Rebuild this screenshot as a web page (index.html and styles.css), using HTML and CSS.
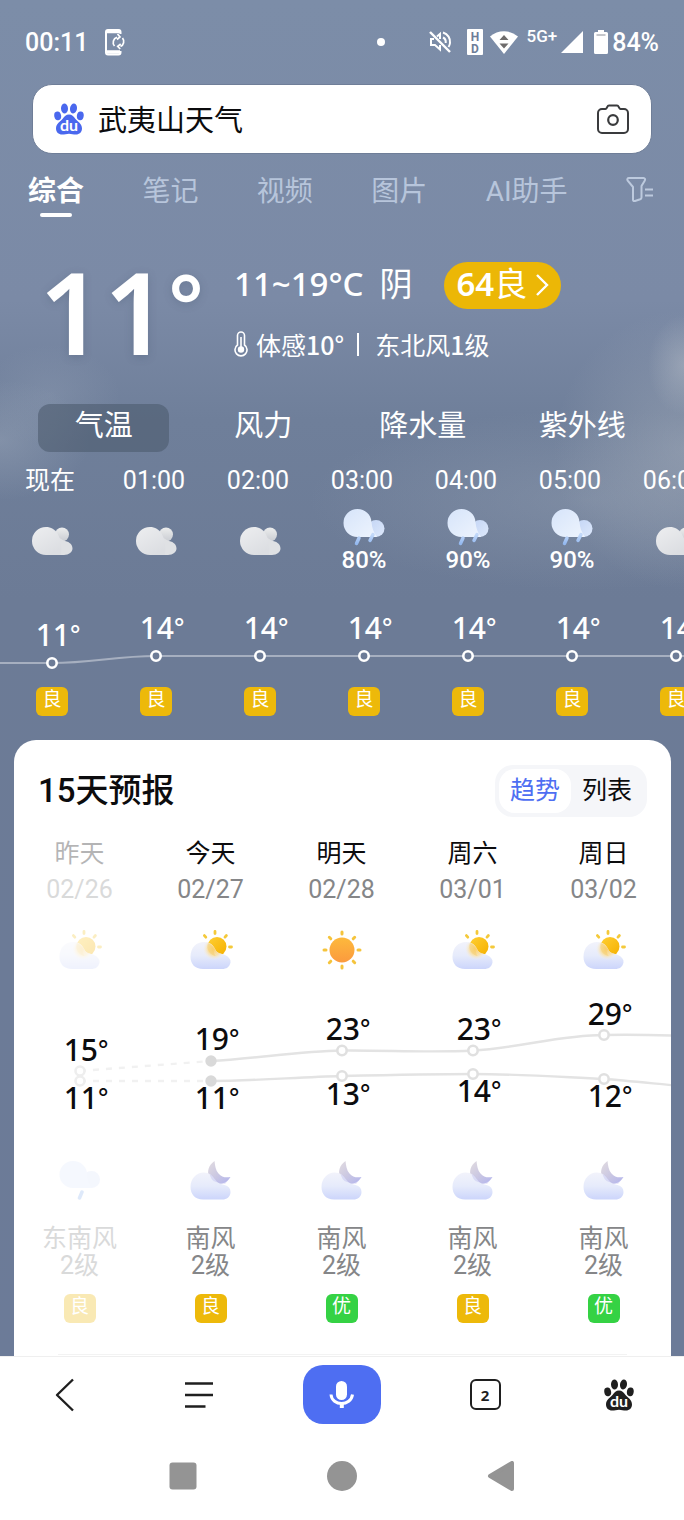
FILE: index.html
```html
<!DOCTYPE html>
<html lang="zh-CN">
<head>
<meta charset="utf-8">
<meta name="viewport" content="width=device-width, initial-scale=1">
<title>武夷山天气</title>
<link rel="stylesheet" href="styles.css">
</head>
<body>
<svg class="sprite" width="0" height="0" aria-hidden="true">
  <defs>
    <linearGradient id="grey" x1="0" y1="0" x2=".6" y2="1"><stop offset="0" stop-color="#edeef0"/><stop offset="1" stop-color="#dcdee2"/></linearGradient>
    <linearGradient id="greySmall" x1="0" y1="0" x2="0" y2="1"><stop offset="0" stop-color="#eceded"/><stop offset="1" stop-color="#c9ccd2"/></linearGradient>
    <linearGradient id="rainBig" x1="0" y1="0" x2="1" y2="1"><stop offset="0" stop-color="#d6e4fa"/><stop offset="1" stop-color="#eef4fd"/></linearGradient>
    <linearGradient id="rainSmall" x1="0" y1="0" x2="1" y2="1"><stop offset="0" stop-color="#c3d5f5"/><stop offset="1" stop-color="#dde8fb"/></linearGradient>
    <linearGradient id="drop" x1="0" y1="0" x2="0" y2="1"><stop offset="0" stop-color="#c3d9f9"/><stop offset="1" stop-color="#94b9f0"/></linearGradient>
    <linearGradient id="dayCloud" x1="0" y1="0" x2="0" y2="1"><stop offset="0" stop-color="#f2f3fb"/><stop offset=".5" stop-color="#e6ebfb"/><stop offset="1" stop-color="#ccd5fb"/></linearGradient>
    <linearGradient id="sunFill" x1="0" y1="0" x2="1" y2="1"><stop offset="0" stop-color="#ffcf33"/><stop offset="1" stop-color="#f5b000"/></linearGradient>
    <linearGradient id="sunFull" x1="0" y1="0" x2="0" y2="1"><stop offset="0" stop-color="#fdb93c"/><stop offset="1" stop-color="#fb9a3e"/></linearGradient>
    <radialGradient id="glow" gradientUnits="userSpaceOnUse" cx="25" cy="20" r="11"><stop offset="0" stop-color="#fbcf6c"/><stop offset=".6" stop-color="#fbe0a0" stop-opacity=".8"/><stop offset="1" stop-color="#f6efe0" stop-opacity="0"/></radialGradient>
    <linearGradient id="moonFill" x1="0" y1="0" x2="1" y2="1"><stop offset="0" stop-color="#e2dce0"/><stop offset=".5" stop-color="#cbc8e2"/><stop offset="1" stop-color="#b2b4ee"/></linearGradient>
  </defs>
  <symbol id="cloud" viewBox="0 0 42 30">
    <circle cx="31" cy="8.500" r="7" fill="url(#greySmall)"/>
    <path d="M24 29V9c4 2 7 5 10 6 5 1 7.500 4 7.500 7.500C41.500 26 38 29 33 29z" fill="#dfe1e4"/>
    <path d="M15 1c5 0 9 2.500 11.500 6.500C29 12 31 18 30 29H15A14 14 0 0 1 15 1z" fill="url(#grey)"/>
  </symbol>
  <symbol id="rain" viewBox="0 0 42 38">
    <circle cx="33" cy="20.500" r="8.500" fill="url(#rainSmall)"/>
    <path d="M14.500 1C22 1 28 6.500 28.500 14c.5 6 2 10 5.500 15H14.500a14 14 0 0 1 0-28z" fill="url(#rainBig)"/>
    <path d="M16 30l-2.500 5.500M30 26.500l-3 6" stroke="url(#drop)" stroke-width="3.500" stroke-linecap="round"/>
  </symbol>
  <symbol id="partly" viewBox="0 0 44 42">
    <g stroke="#f4c93a" stroke-width="2.800" stroke-linecap="round"><path d="M26 2.500v2M37.400 6.500l-1.400 1.600M40.500 18h2M15.400 6.600l1.400 1.600"/></g>
    <circle cx="28" cy="17.500" r="9.500" fill="url(#sunFill)"/>
    <path d="M14 40C6 40 1.500 35 1.500 28 1.500 18 8 13 15 13c6 0 9 3 11 7 2 5 6 4 10 6 4 2 6 4.500 5.500 7.500-1 4.500-4 6.500-8.500 6.500z" fill="url(#dayCloud)"/>
    <path d="M15 13c6 0 9 3 11 7 2 5 6 4 10 6l-8 6-18-6z" fill="url(#glow)"/>
    <path d="M19 14a9.500 9.500 0 0 0 8 13c-2-1-2-5-3-8s-3-4-5-5z" fill="#f6c75a" opacity=".4"/>
  </symbol>
  <symbol id="sun" viewBox="0 0 44 42">
    <g stroke="#f5c43c" stroke-width="3" stroke-linecap="round"><path d="M22 3v2M22 37v2M4 21h2M38 21h2M9.300 8.300l1.500 1.500M33.200 32.200l1.500 1.500M34.700 8.300l-1.500 1.500M10.800 32.200l-1.500 1.500"/></g>
    <circle cx="22" cy="21" r="12.500" fill="url(#sunFull)"/>
  </symbol>
  <symbol id="night" viewBox="0 0 44 42">
    <path d="M25.500 2c-6 4-8 11-5 17 4 8 16 8 21-1-5 1-9 0-12-3.500C26.500 11 26 6 25.500 2z" fill="url(#moonFill)"/>
    <path d="M14 40.500C6 40.500 1.500 35 1.500 28 1.500 19 8 13.500 14.500 13.500c6 0 9 3 12 7.500 2 3 5 4 9 5 4 1 6 3.500 6 7 0 5-4 7.500-8 7.500z" fill="url(#dayCloud)"/>
    <path d="M20.500 15c1 4 3 7 6.500 8 4 1 9 0 13-3l-4 5c-4-1-7-2-9.500-4.500-2-3-4-4.500-6-5.500z" fill="#bcbcee" opacity=".4"/>
  </symbol>
  <symbol id="drizzle" viewBox="0 0 44 42">
    <circle cx="33.500" cy="20.500" r="8.500" fill="#dce5fb"/>
    <path d="M15 2C22.500 2 28.500 7.500 29 14.500c.5 6 2 9.500 5 14.500H15A13.500 13.500 0 0 1 15 2z" fill="#e0e9fc"/>
    <path d="M24 33l-2.500 6" stroke="#94b9f0" stroke-width="3.500" stroke-linecap="round"/>
  </symbol>
  <symbol id="paw" viewBox="0 0 30 32">
    <g fill="currentColor">
      <ellipse cx="10.500" cy="5.500" rx="3.500" ry="5" transform="rotate(-4 10.500 5.500)"/>
      <ellipse cx="19.500" cy="5.500" rx="3.500" ry="5" transform="rotate(8 19.500 5.500)"/>
      <ellipse cx="3.700" cy="12.800" rx="3.400" ry="4.400" transform="rotate(-10 3.700 12.800)"/>
      <ellipse cx="26.300" cy="12.800" rx="3.400" ry="4.400" transform="rotate(8 26.300 12.800)"/>
      <path d="M15 11.500c3 0 4.500 1.800 6.300 4.300C23.500 18.800 28 20.500 28 25.500c0 3.800-2.700 6-6 6-2.800 0-4.500-.8-7-.8s-4.200.8-7 .8c-3.300 0-6-2.200-6-6 0-5 4.500-6.700 6.700-9.700C10.500 13.300 12 11.500 15 11.500z"/>
    </g>
    <text x="15" y="28" text-anchor="middle" class="paw-text">du</text>
  </symbol>
</svg>

<main class="page">
  <header class="status">
    <span class="clock">00:11</span>
    <svg class="sync" width="21" height="27" viewBox="0 0 21 27" fill="none" stroke="#fff" stroke-width="2">
      <path d="M15.500 5V3a2 2 0 0 0-2-2H3a2 2 0 0 0-2 2v20.500a2 2 0 0 0 2 2h10.500a2 2 0 0 0 2-2V22"/>
      <path d="M2 2.500h13M2 23h13" stroke-width="3.500"/>
      <path d="M12 8.200A5.500 5.500 0 0 0 9.500 17M15.500 17.500A5.500 5.500 0 0 0 17.500 9M12.500 5l2.500 3-3 2.500M15.200 20l-2.500-2.600 3-2.400" stroke-width="1.700"/>
    </svg>
    <span class="status-right">
      <i class="dot"></i>
      <svg class="mute" width="24" height="24" viewBox="0 0 24 24" fill="none" stroke="#fff" stroke-width="2"><path d="M2 2l20 20" stroke-width="2.400"/><path d="M6 9H3v6h4l5 4.500V15M9 6.500L12 4v5"/><path d="M15 2.500c5 1.500 7.500 6 7 10.500-.2 1.500-.8 3-1.500 4M15 7.500c2 1 3 3 2.700 5.500"/></svg>
      <svg class="hd" width="16" height="26" viewBox="0 0 16 26"><rect width="16" height="26" rx="1" fill="#fff"/><text x="8" y="12" text-anchor="middle">H</text><text x="8" y="24" text-anchor="middle">D</text></svg>
      <svg class="wifi" width="28" height="23" viewBox="0 0 28 23"><path d="M0 5.500C8-1.500 20-1.500 28 5.500L14 23z" fill="#fff"/><path d="M14 4l4.500 5h-9zM14 17.500l-4.500-5h9z" fill="#6e6c6c"/></svg>
      <span class="net">5G+</span>
      <svg class="signal" width="22" height="22" viewBox="0 0 22 22"><path d="M22 0v22H0z" fill="#fff"/></svg>
      <svg class="battery" width="14" height="24" viewBox="0 0 14 24"><path d="M4 0h6v2h2.500A1.500 1.500 0 0 1 14 3.500V22.500a1.500 1.500 0 0 1-1.500 1.500h-11A1.500 1.500 0 0 1 0 22.500V3.500A1.500 1.500 0 0 1 1.500 2H4z" fill="#fff"/><path d="M2.500 5h9" stroke="#8a8d96"/></svg>
      <span>84%</span>
    </span>
  </header>

  <form class="search" role="search">
    <svg class="brand" width="30" height="32" aria-hidden="true"><use href="#paw"/></svg>
    <input class="query" type="text" value="武夷山天气" aria-label="搜索">
    <button class="icon-btn" type="button" aria-label="拍照搜索">
      <svg width="32" height="30" viewBox="0 0 32 30" fill="none" stroke="#3a3b3d" stroke-width="2"><path d="M5 5h3.500c1.500 0 1.500-3.500 3.500-3.500h8c2 0 2 3.500 3.500 3.500H27a4 4 0 0 1 4 4v16a4 4 0 0 1-4 4H5a4 4 0 0 1-4-4V9a4 4 0 0 1 4-4z"/><circle cx="16" cy="16" r="4.800" stroke-width="2.200"/></svg>
    </button>
  </form>

  <nav class="tabs">
    <a class="tab active" href="#">综合</a>
    <a class="tab" href="#">笔记</a>
    <a class="tab" href="#">视频</a>
    <a class="tab" href="#">图片</a>
    <a class="tab" href="#">AI助手</a>
    <button class="icon-btn" type="button" aria-label="筛选">
      <svg width="28" height="26" viewBox="0 0 28 26" fill="none" stroke="#bdcade" stroke-width="2"><path d="M3 2h14.500c1.500 0 2 1.500 1.200 2.700L15.500 10v11.500c0 1-.5 1.500-1.300 1.800L9 25c-1.200.3-2-.2-2-1.300V11L1.700 4.700C.8 3.500 1.500 2 3 2z" stroke-linejoin="round"/><path d="M19 13.500h8M19 19.500h8"/></svg>
    </button>
  </nav>

  <section class="now">
    <p class="big">11<span>°</span></p>
    <div class="facts">
      <div class="range">
        <span>11~19°C</span>
        <span class="sky">阴</span>
        <a class="aqi" href="#">64<span>良</span>
          <svg width="13" height="24" viewBox="0 0 13 24" fill="none" stroke="#fff" stroke-width="2.400"><path d="M1 2l10 10L1 22"/></svg>
        </a>
      </div>
      <p class="feel">
        <svg width="14" height="26" viewBox="0 0 14 26" fill="none" stroke="#fff" stroke-width="1.600"><path d="M3.500 14V4.500a3.500 3.500 0 0 1 7 0V14a6 6 0 1 1-7 0z"/><path d="M7 6v11"/><circle cx="7" cy="18.500" r="2.400" fill="#fff"/></svg>
        <span>体感<b>10°</b></span><i class="bar"></i><span>东北风<b>1</b>级</span>
      </p>
    </div>
  </section>

  <div class="metrics">
    <button class="metric on" type="button">气温</button>
    <button class="metric" type="button">风力</button>
    <button class="metric" type="button">降水量</button>
    <button class="metric" type="button">紫外线</button>
  </div>

  <section class="hourly">
    <div class="hours">
      <div class="hour"><span class="time">现在</span><div class="sky-box"><svg width="42" height="30"><use href="#cloud"/></svg></div></div>
      <div class="hour"><span class="time">01:00</span><div class="sky-box"><svg width="42" height="30"><use href="#cloud"/></svg></div></div>
      <div class="hour"><span class="time">02:00</span><div class="sky-box"><svg width="42" height="30"><use href="#cloud"/></svg></div></div>
      <div class="hour"><span class="time">03:00</span><div class="sky-box"><svg width="42" height="38"><use href="#rain"/></svg><span>80%</span></div></div>
      <div class="hour"><span class="time">04:00</span><div class="sky-box"><svg width="42" height="38"><use href="#rain"/></svg><span>90%</span></div></div>
      <div class="hour"><span class="time">05:00</span><div class="sky-box"><svg width="42" height="38"><use href="#rain"/></svg><span>90%</span></div></div>
      <div class="hour"><span class="time">06:00</span><div class="sky-box"><svg width="42" height="30"><use href="#cloud"/></svg></div></div>
    </div>
    <svg class="hour-chart" width="728" height="104" viewBox="0 0 728 104">
      <path d="M0 80H52C92 80 116 73 156 73H728" fill="none" stroke="#fff" stroke-opacity=".4" stroke-width="2"/>
      <g fill="#6d7c97" stroke="#fff" stroke-width="2.600"><circle cx="52" cy="80" r="4.700"/><circle cx="156" cy="73" r="4.700"/><circle cx="260" cy="73" r="4.700"/><circle cx="364" cy="73" r="4.700"/><circle cx="468" cy="73" r="4.700"/><circle cx="572" cy="73" r="4.700"/><circle cx="676" cy="73" r="4.700"/></g>
      <g class="deg light"><text x="58" y="63">11<tspan>°</tspan></text><text x="162" y="56">14<tspan>°</tspan></text><text x="266" y="56">14<tspan>°</tspan></text><text x="370" y="56">14<tspan>°</tspan></text><text x="474" y="56">14<tspan>°</tspan></text><text x="578" y="56">14<tspan>°</tspan></text><text x="682" y="56">14<tspan>°</tspan></text></g>
    </svg>
    <div class="hours"><div class="hour"><span class="badge">良</span></div><div class="hour"><span class="badge">良</span></div><div class="hour"><span class="badge">良</span></div><div class="hour"><span class="badge">良</span></div><div class="hour"><span class="badge">良</span></div><div class="hour"><span class="badge">良</span></div><div class="hour"><span class="badge">良</span></div></div>
  </section>

  <section class="card">
    <div class="card-head">
      <h2>15天预报</h2>
      <div class="toggle"><button class="seg on" type="button">趋势</button><button class="seg" type="button">列表</button></div>
    </div>
    <div class="scroller">
      <div class="days">
        <div class="day past"><b>昨天</b><span>02/26</span><svg width="44" height="42"><use href="#partly"/></svg></div>
        <div class="day"><b>今天</b><span>02/27</span><svg width="44" height="42"><use href="#partly"/></svg></div>
        <div class="day"><b>明天</b><span>02/28</span><svg width="44" height="42"><use href="#sun"/></svg></div>
        <div class="day"><b>周六</b><span>03/01</span><svg width="44" height="42"><use href="#partly"/></svg></div>
        <div class="day"><b>周日</b><span>03/02</span><svg width="44" height="42"><use href="#partly"/></svg></div>
      </div>
      <svg class="day-chart" width="786" height="188" viewBox="0 0 786 188">
        <g fill="none" stroke="#e3e3e3" stroke-width="2.400">
          <path d="M66 100L197 90M66 110H197" stroke="#f1f1f1" stroke-dasharray="6 7"/>
          <path d="M197 90C240 88 285 80 328 79.500C372 79 416 82 459 79.500C505 77 546 64 590 64C650 63 700 66 786 72"/>
          <path d="M197 110C240 110 285 106 328 105C372 104 416 103 459 103C505 103 546 106 590 108C620 110 640 113 786 126"/>
        </g>
        <g fill="#fff" stroke="#e0e0e0" stroke-width="2.600">
          <circle cx="66" cy="100" r="4.500" stroke="#eee"/><circle cx="66" cy="110" r="4.500" stroke="#eee"/>
          <circle cx="328" cy="79.500" r="4.700"/><circle cx="459" cy="79.500" r="4.700"/><circle cx="590" cy="64" r="4.700"/>
          <circle cx="328" cy="105" r="4.700"/><circle cx="459" cy="103" r="4.700"/><circle cx="590" cy="108" r="4.700"/>
        </g>
        <g fill="#d9d9d9"><circle cx="197" cy="90" r="5.700"/><circle cx="197" cy="110" r="5.700"/></g>
        <g class="deg"><text x="72" y="90">15<tspan>°</tspan></text><text x="203" y="79">19<tspan>°</tspan></text><text x="334" y="69">23<tspan>°</tspan></text><text x="465" y="69">23<tspan>°</tspan></text><text x="596" y="54">29<tspan>°</tspan></text><text x="72" y="138">11<tspan>°</tspan></text><text x="203" y="138">11<tspan>°</tspan></text><text x="334" y="134">13<tspan>°</tspan></text><text x="465" y="131">14<tspan>°</tspan></text><text x="596" y="136">12<tspan>°</tspan></text></g>
      </svg>
      <div class="days">
        <div class="day past"><svg width="44" height="42"><use href="#drizzle"/></svg><p>东南风<br>2级</p><span class="badge">良</span></div>
        <div class="day"><svg width="44" height="42"><use href="#night"/></svg><p>南风<br>2级</p><span class="badge">良</span></div>
        <div class="day"><svg width="44" height="42"><use href="#night"/></svg><p>南风<br>2级</p><span class="badge good">优</span></div>
        <div class="day"><svg width="44" height="42"><use href="#night"/></svg><p>南风<br>2级</p><span class="badge">良</span></div>
        <div class="day"><svg width="44" height="42"><use href="#night"/></svg><p>南风<br>2级</p><span class="badge good">优</span></div>
      </div>
    </div>
    <hr class="rule">
  </section>
</main>

<footer class="bottom">
  <nav class="toolbar">
    <button class="icon-btn" type="button" aria-label="返回"><svg width="20" height="34" viewBox="0 0 20 34" fill="none" stroke="#1f1f1f" stroke-width="2.400"><path d="M18 1.500L2 17l16 15.500" stroke-linejoin="round"/></svg></button>
    <button class="icon-btn" type="button" aria-label="菜单"><svg width="30" height="28" viewBox="0 0 30 28" stroke="#1f1f1f" stroke-width="2.600"><path d="M1 2.500h28M1 14h28M1 25.500h20.500"/></svg></button>
    <button class="mic" type="button" aria-label="语音"><svg width="26" height="30" viewBox="0 0 26 30"><rect x="7" y="1" width="11" height="19" rx="5.500" fill="#fff"/><path d="M2 14.500c1 12 20 12 21.500 0" fill="none" stroke="#fff" stroke-width="3"/><path d="M12.800 22v6" stroke="#fff" stroke-width="4"/></svg></button>
    <button class="pages" type="button" aria-label="窗口">2</button>
    <button class="icon-btn home" type="button" aria-label="首页"><svg width="30" height="32"><use href="#paw"/></svg></button>
  </nav>
  <nav class="system">
    <button class="icon-btn" type="button" aria-label="最近"><svg width="28" height="28" viewBox="0 0 28 28"><rect x=".5" y=".5" width="27" height="27" rx="3" fill="#949494"/></svg></button>
    <button class="icon-btn" type="button" aria-label="主屏"><svg width="30" height="30" viewBox="0 0 30 30"><circle cx="15" cy="15" r="15" fill="#949494"/></svg></button>
    <button class="icon-btn" type="button" aria-label="后退"><svg width="28" height="30" viewBox="0 0 28 30"><path d="M25 2v26L3 15z" fill="#949494" stroke="#949494" stroke-width="4" stroke-linejoin="round"/></svg></button>
  </nav>
</footer>
</body>
</html>
```
FILE: styles.css
```css
* { box-sizing: border-box; }

body {
  margin: 0;
  min-height: 100vh;
  display: flex;
  flex-direction: column;
  font-family: Roboto, "Noto Sans CJK SC", sans-serif;
  font-size: 25px;
  color: #fff;
  background: #fff;
}

p, h2 { margin: 0; }
a { color: inherit; text-decoration: none; }
svg { display: block; flex: none; }
b { font-weight: 500; }
button { font: inherit; color: inherit; padding: 0; border: 0; background: none; }
.sprite { position: absolute; }

.page {
  flex: 1;
  display: flex;
  flex-direction: column;
  overflow: hidden;
  background:
    radial-gradient(ellipse 36px 50px at 100% 365px, rgba(190, 196, 204, .4), transparent),
    radial-gradient(ellipse 130px 140px at 100% 450px, rgba(170, 178, 190, .45), transparent),
    radial-gradient(ellipse 280px 90px at 86% 500px, rgba(155, 166, 182, .35), transparent),
    radial-gradient(ellipse 90px 60px at 0 440px, rgba(160, 172, 190, .4), transparent),
    radial-gradient(ellipse 70px 50px at 50px 395px, rgba(150, 163, 184, .3), transparent),
    linear-gradient(#7c8da8 0, #7b8aa6 300px, #6f7f9a 420px, #6c7b96 600px, #6c7b98 100%);
}

.status {
  display: flex;
  align-items: center;
  height: 84px;
  padding: 0 25px;
  font-weight: 500;
}
.sync { margin-left: 17px; }
.status-right { display: flex; align-items: center; margin-left: auto; }
.dot { width: 8px; height: 8px; border-radius: 50%; background: #fff; }
.mute { margin-left: 43px; }
.hd { margin-left: 15px; font-size: 12px; font-weight: 700; fill: #6d7d98; }
.wifi { margin-left: 7px; }
.net { margin: 0 4px 12px 8px; font-size: 17px; line-height: 20px; }
.battery { margin: 0 4px 0 11px; }

.search {
  display: flex;
  align-items: center;
  height: 70px;
  margin: 0 32px;
  padding: 0 22px 0 21px;
  border: 1px solid #6f7e98;
  border-radius: 20px;
  background: #fff;
}
.brand { color: #4a68ee; }
.query {
  flex: 1;
  min-width: 0;
  padding: 4px 0 0 14px;
  border: 0;
  outline: 0;
  background: none;
  font: 29px/40px Roboto, "Noto Sans CJK SC", sans-serif;
  color: #0b0b0d;
}
.paw-text { font: 700 16px Lato, sans-serif; fill: #fff; }

.tabs {
  display: flex;
  align-items: flex-start;
  justify-content: space-between;
  padding: 18px 30px 0 28px;
  font-size: 28px;
  line-height: 40px;
  color: #b7c5db;
}
.tab.active { color: #fff; font-weight: 700; }
.tab.active::after {
  content: "";
  display: block;
  width: 32px;
  height: 4px;
  margin: 1px auto 0;
  border-radius: 2px;
  background: #fff;
}
.tabs .icon-btn { padding-top: 4px; }

.now {
  display: flex;
  padding: 45px 20px 0 39px;
}
.big {
  display: flex;
  align-items: flex-start;
  width: 195px;
  font: 600 113px/98px "Noto Sans", sans-serif;
  text-shadow: 0 2px 8px rgba(60, 75, 100, .25);
}
.big span {
  font: 700 88px/86px "Noto Sans CJK SC", sans-serif;
}
.range {
  display: flex;
  align-items: flex-start;
  height: 47px;
  font: 500 33px/43px "Noto Sans", "Noto Sans CJK SC", sans-serif;
}
.sky { margin-left: 16px; font-weight: 400; }
.aqi {
  display: flex;
  align-items: flex-start;
  height: 47px;
  margin-left: 32px;
  padding: 0 12px;
  border-radius: 24px;
  background: #ecb706;
  font-weight: 600;
}
.aqi span { font-weight: 400; }
.aqi svg { margin: 11px 0 0 9px; }
.feel {
  display: flex;
  align-items: center;
  margin-top: 16px;
  font: 25px/38px "Noto Sans CJK SC", sans-serif;
}
.feel svg { margin-right: 8px; }
.bar { width: 2px; height: 23px; margin: 0 16px 0 13px; background: #fff; }

.metrics {
  display: grid;
  grid-template-columns: repeat(4, 1fr);
  justify-items: center;
  padding: 41px 22px 11px 24px;
}
.metric {
  min-width: 131px;
  height: 48px;
  padding: 0 12px 4px;
  border-radius: 12px;
  font-size: 29px;
  line-height: 44px;
}
.metric.on { background: rgba(72, 88, 106, .55); }

.hourly { overflow: hidden; }
.hours { display: flex; }
.hour {
  flex: none;
  width: 104px;
  display: flex;
  flex-direction: column;
  align-items: center;
}
.time { padding-right: 4px; line-height: 36px; }
.sky-box {
  display: flex;
  flex-direction: column;
  align-items: center;
  justify-content: center;
  height: 84px;
  font-size: 24px;
  font-weight: 500;
  line-height: 28px;
}
.deg { font: 500 30px "Noto Sans", sans-serif; fill: #0c0c0e; text-anchor: middle; }
.deg tspan { font-family: "Noto Sans CJK SC", sans-serif; font-size: 27px; }
.deg.light { fill: #fff; }
.badge {
  width: 32px;
  height: 29px;
  border-radius: 6px;
  background: #edb90a;
  color: #fff;
  font-size: 19px;
  line-height: 26px;
  text-align: center;
}
.badge.good { background: #35d244; }

.card {
  flex: 1;
  margin: 24px 13px 0 14px;
  padding-top: 25px;
  border-radius: 22px 22px 0 0;
  background: #fff;
  color: #0c0c0e;
}
.card-head {
  display: flex;
  align-items: center;
  justify-content: space-between;
  padding: 0 24px;
}
.card-head h2 { font-size: 33px; font-weight: 500; line-height: 44px; }
.toggle {
  display: flex;
  padding: 4px;
  border-radius: 18px;
  background: #f5f6f9;
}
.seg { width: 72px; height: 44px; border-radius: 16px; line-height: 40px; }
.seg.on { background: #fff; color: #4e6ef2; }

.scroller { overflow: hidden; padding-top: 19px; }
.days { display: flex; }
.day {
  flex: none;
  width: 131px;
  display: flex;
  flex-direction: column;
  align-items: center;
  line-height: 36px;
  color: #858688;
}
.day > b { color: #0c0c0e; font-weight: 400; }
.day > span + svg { margin-top: 21px; }
.day p { margin: 24px 0 15px; line-height: 27px; text-align: center; }
.day .badge { line-height: 26px; }
.past > * { opacity: .3; }

.rule { height: 1px; margin: 31px 44px 0; border: 0; background: #f3f3f3; }

.bottom {
  position: sticky;
  bottom: 0;
  border-top: 1px solid #efefef;
  background: #fff;
  color: #1f1f1f;
}
.toolbar {
  display: grid;
  grid-template-columns: 130fr 138fr 148fr 138fr 130fr;
  place-items: center;
  height: 75px;
}
.icon-btn { display: flex; align-items: center; }
.mic {
  display: flex;
  align-items: center;
  justify-content: center;
  width: 78px;
  height: 59px;
  border-radius: 20px;
  background: #4e6ef2;
}
.pages {
  width: 31px;
  height: 31px;
  border: 2px solid #1f1f1f;
  border-radius: 6px;
  font: 700 15px/24px "Noto Sans", sans-serif;
}
.system {
  display: grid;
  grid-template-columns: repeat(3, 159px);
  justify-content: center;
  place-items: center;
  height: 88px;
}
```
